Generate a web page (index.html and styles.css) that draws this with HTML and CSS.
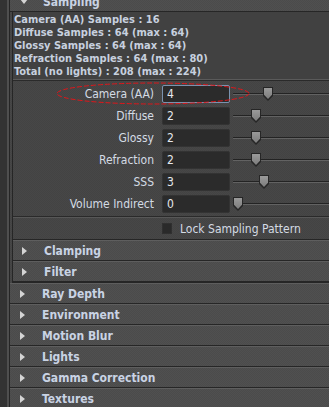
FILE: index.html
```html
<!DOCTYPE html>
<html lang="en">
<head>
  <meta charset="UTF-8" />
  <title>Render Settings - Sampling</title>
  <link rel="stylesheet" href="styles.css">
</head>
<body>
  <div class="panel">

    <!-- Sampling (expanded, scrolled so the header is cut off) -->
    <div class="head head-top open">
      <span class="tri"></span>
      <span class="head-label">Sampling</span>
    </div>

    <div class="section-body">
      <div class="info">
        <div>Camera (AA) Samples : 16</div>
        <div>Diffuse Samples : 64 (max : 64)</div>
        <div>Glossy Samples : 64 (max : 64)</div>
        <div>Refraction Samples : 64 (max : 80)</div>
        <div>Total (no lights) : 208 (max : 224)</div>
      </div>

      <div class="rows">
        <label class="row-label">Camera (AA)</label>
        <div class="field active">4</div>
        <div class="slider"><span class="thumb" style="left: 30px"></span></div>

        <label class="row-label">Diffuse</label>
        <div class="field">2</div>
        <div class="slider"><span class="thumb" style="left: 18px"></span></div>

        <label class="row-label">Glossy</label>
        <div class="field">2</div>
        <div class="slider"><span class="thumb" style="left: 18px"></span></div>

        <label class="row-label">Refraction</label>
        <div class="field">2</div>
        <div class="slider"><span class="thumb" style="left: 18px"></span></div>

        <label class="row-label">SSS</label>
        <div class="field">3</div>
        <div class="slider"><span class="thumb" style="left: 26px"></span></div>

        <label class="row-label">Volume Indirect</label>
        <div class="field">0</div>
        <div class="slider"><span class="thumb" style="left: 0px"></span></div>
      </div>

      <div class="lock-row">
        <span class="check"></span>
        <span class="lock-label">Lock Sampling Pattern</span>
      </div>

      <div class="head sub"><span class="tri"></span><span class="head-label">Clamping</span></div>
      <div class="head sub"><span class="tri"></span><span class="head-label">Filter</span></div>
    </div>

    <div class="head"><span class="tri"></span><span class="head-label">Ray Depth</span></div>
    <div class="head"><span class="tri"></span><span class="head-label">Environment</span></div>
    <div class="head"><span class="tri"></span><span class="head-label">Motion Blur</span></div>
    <div class="head"><span class="tri"></span><span class="head-label">Lights</span></div>
    <div class="head"><span class="tri"></span><span class="head-label">Gamma Correction</span></div>
    <div class="head"><span class="tri"></span><span class="head-label">Textures</span></div>

    <!-- red annotation ring around the Camera (AA) row -->
    <svg class="mark" width="200" height="26" viewBox="0 0 200 26">
      <ellipse cx="100" cy="12.5" rx="96" ry="10.5" fill="none" stroke="#e0161a" stroke-width="1" stroke-dasharray="5 2"/>
    </svg>
  </div>
</body>
</html>
```

FILE: styles.css
```css
/* base */
* {
  margin: 0;
  padding: 0;
  box-sizing: border-box;
}
html, body {
  width: 329px;
  height: 407px;
  overflow: hidden;
  font-family: "DejaVu Sans Condensed", "Liberation Sans", sans-serif;
  font-size: 11px;
  color: #d2d9e3;
}
body {
  background: linear-gradient(to right, #333 0 7px, #4f4f4f 7px 9px, #262626 9px 10px, #333 10px);
}
.panel {
  position: relative;
  display: flow-root;
  margin-left: 10px;
  height: 100%;
  background: #454545;
  background-image: repeating-conic-gradient(#474747 0 25%, #434343 0 50%);
  background-size: 2px 2px;
}

/* section headers */
.head {
  display: flex;
  align-items: center;
  height: 21px;
  padding-left: 10px;
  background: #4e4e4e;
  background-image: repeating-conic-gradient(#505050 0 25%, #4b4b4b 0 50%);
  background-size: 2px 2px;
  border-top: 1px solid #5e5e5e;
  border-bottom: 1px solid #262626;
}
.head-top {
  margin-top: -9px;
}
.head .tri {
  width: 0;
  height: 0;
  border-top: 4px solid transparent;
  border-bottom: 4px solid transparent;
  border-left: 5px solid #d4d4d4;
  margin-right: 17px;
}
.head.open .tri {
  border-left: 4px solid transparent;
  border-right: 4px solid transparent;
  border-top: 5px solid #d4d4d4;
  border-bottom: 0;
  margin-right: 15px;
}
.head-label {
  font-size: 12px;
  font-weight: bold;
  color: #c9d3e4;
}
.head.sub {
  padding-left: 9px;
}

/* expanded section */
.section-body {
  margin-left: 2px;
  border-left: 1px solid #262626;
  border-bottom: 1px solid #262626;
}
.info {
  padding: 1px 0 1px 1px;
  line-height: 13px;
  font-weight: bold;
  color: #c7d0df;
  background: #414141;
  border-bottom: 1px solid #5a5a5a;
  box-shadow: 0 1px 0 #2a2a2a;
}

.rows {
  display: grid;
  grid-template-columns: 149px 68px 1fr;
  grid-auto-rows: 18px;
  row-gap: 4px;
  padding: 5px 0 3px;
  border-bottom: 1px solid #2a2a2a;
  align-items: center;
}
.row-label {
  text-align: right;
  padding-right: 8px;
  font-size: 12px;
  color: #d4dbe4;
}
.field {
  height: 18px;
  line-height: 17px;
  padding-left: 4px;
  font-size: 12px;
  color: #e6e9ee;
  background: #2b2b2b;
  border: 1px solid #333;
  border-radius: 2px;
}
.field.active {
  border-color: #7a93b0;
}
.slider {
  position: relative;
  height: 18px;
  margin-left: 3px;
}
.slider::before {
  content: '';
  position: absolute;
  left: 0;
  right: 0;
  top: 8px;
  height: 1px;
  background: #232323;
  box-shadow: 0 1px 0 #626262;
}
.thumb {
  position: absolute;
  top: 2px;
  width: 10px;
  height: 14px;
  background: #262626;
  clip-path: polygon(0 0, 100% 0, 100% 65%, 50% 100%, 0 65%);
}
.thumb::after {
  content: '';
  position: absolute;
  left: 1px;
  top: 1px;
  width: 8px;
  height: 11px;
  background: linear-gradient(#9a9a9a, #7c7c7c);
  clip-path: polygon(0 0, 100% 0, 100% 62%, 50% 100%, 0 62%);
}

.lock-row {
  display: flex;
  align-items: center;
  height: 23px;
  padding-left: 149px;
  border-top: 1px solid #575757;
  border-bottom: 1px solid #262626;
}
.check {
  width: 10px;
  height: 11px;
  background: #2a2a2a;
  border: 1px solid #303030;
  margin-right: 8px;
}
.lock-label {
  font-size: 12px;
  color: #d4dbe4;
}

/* annotation */
.mark {
  position: absolute;
  left: 43px;
  top: 81px;
}
```
